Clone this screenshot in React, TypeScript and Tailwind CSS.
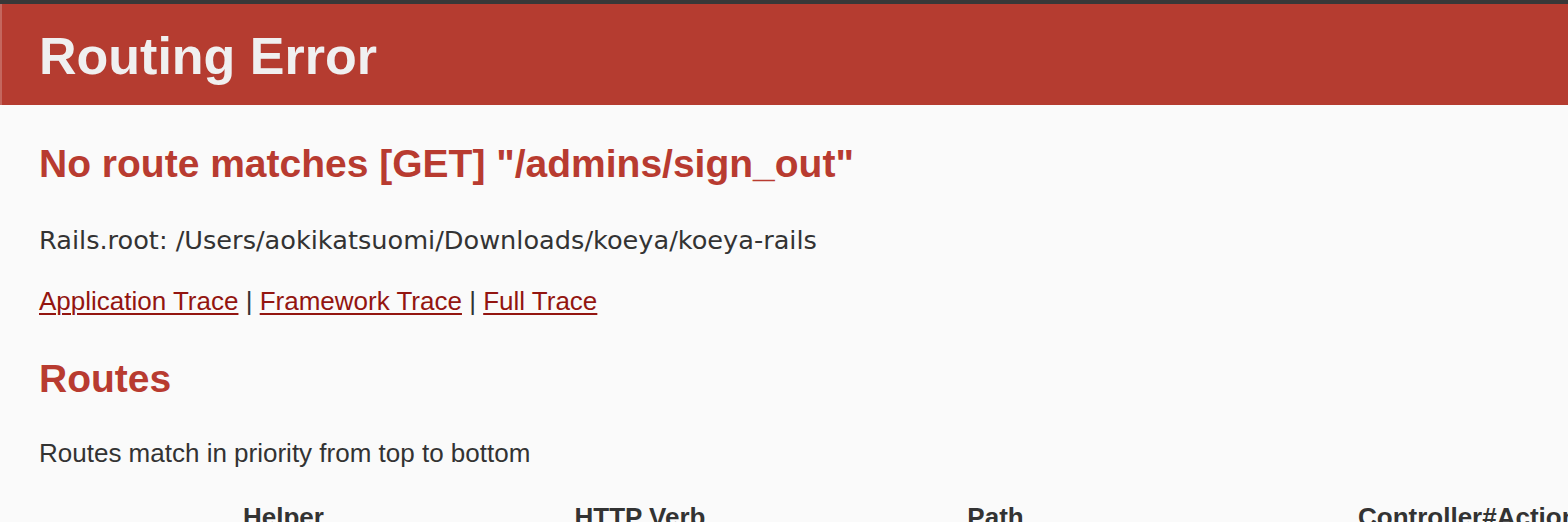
import React from 'react';

const sans = 'font-["Liberation_Sans",Helvetica,Arial,sans-serif]';

export default function App() {
  return (
    <div className={`min-h-[522px] w-full overflow-hidden bg-[#fafafa] text-[#333] ${sans}`}>
      {/* window top edge */}
      <div className="h-[4px] bg-[#383838]" />

      <header className="h-[101px] border-l-2 border-[#c4675e] bg-[#b53c30] pl-[37px] pt-[24px] text-[#f0f0f0]">
        <h1 className="text-[52px] font-bold leading-[57px]">Routing Error</h1>
      </header>

      <div className="px-[39px]">
        <h2 className="mt-[34px] text-[39px] font-bold leading-[50px] text-[#b83b30]">
          No route matches [GET] "/admins/sign_out"
        </h2>

        <p className="mt-[33px] text-[26px] leading-[36px]">
          <code className='font-["DejaVu_Sans",sans-serif] text-[25.6px]'>
            Rails.root: /Users/aokikatsuomi/Downloads/koeya/koeya-rails
          </code>
        </p>

        <p className="mt-[25px] text-[26px] leading-[36px]">
          <a href="#" className="text-[#931510] underline decoration-[2px] underline-offset-[3px]">
            Application Trace
          </a>{' '}
          |{' '}
          <a href="#" className="text-[#931510] underline decoration-[2px] underline-offset-[3px]">
            Framework Trace
          </a>{' '}
          |{' '}
          <a href="#" className="text-[#931510] underline decoration-[2px] underline-offset-[3px]">
            Full Trace
          </a>
        </p>

        <h2 className="mt-[35px] text-[39px] font-bold leading-[50px] text-[#b83b30]">Routes</h2>

        <p className="mt-[31px] text-[26px] leading-[36px]">Routes match in priority from top to bottom</p>

        <table className="mt-[28px] w-[1686px] table-fixed border-collapse">
          <colgroup>
            <col className="w-[489px]" />
            <col className="w-[224px]" />
            <col className="w-[487px]" />
            <col className="w-[486px]" />
          </colgroup>
          <thead>
            <tr className="text-[26px] font-bold leading-[36px]">
              <th>Helper</th>
              <th>HTTP Verb</th>
              <th>Path</th>
              <th className="pl-[119px] text-left">Controller#Action</th>
            </tr>
          </thead>
        </table>
      </div>
    </div>
  );
}
